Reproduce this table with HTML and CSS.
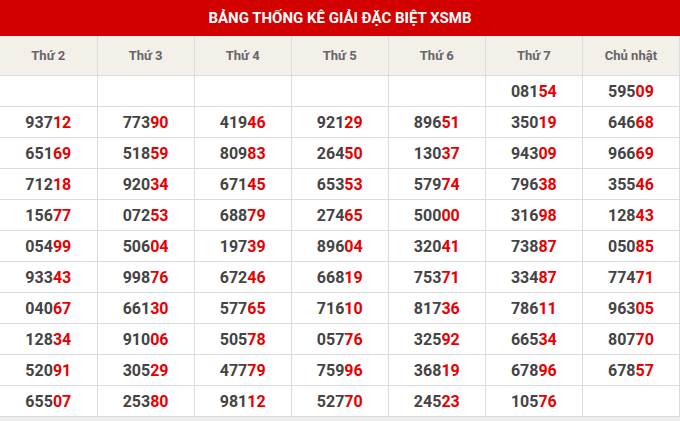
FILE: index.html
```html
<!DOCTYPE html>
<html lang="vi">
<head>
<meta charset="utf-8">
<link rel="stylesheet" href="styles.css">
</head>
<body>
<div class="box">
  <div class="title">BẢNG THỐNG KÊ GIẢI ĐẶC BIỆT XSMB</div>
  <table class="stats">
    <thead>
      <tr><th>Thứ 2</th><th>Thứ 3</th><th>Thứ 4</th><th>Thứ 5</th><th>Thứ 6</th><th>Thứ 7</th><th>Chủ nhật</th></tr>
    </thead>
    <tbody>
      <tr><td></td><td></td><td></td><td></td><td></td><td>081<b>54</b></td><td>595<b>09</b></td></tr>
      <tr><td>937<b>12</b></td><td>773<b>90</b></td><td>419<b>46</b></td><td>921<b>29</b></td><td>896<b>51</b></td><td>350<b>19</b></td><td>646<b>68</b></td></tr>
      <tr><td>651<b>69</b></td><td>518<b>59</b></td><td>809<b>83</b></td><td>264<b>50</b></td><td>130<b>37</b></td><td>943<b>09</b></td><td>966<b>69</b></td></tr>
      <tr><td>712<b>18</b></td><td>920<b>34</b></td><td>671<b>45</b></td><td>653<b>53</b></td><td>579<b>74</b></td><td>796<b>38</b></td><td>355<b>46</b></td></tr>
      <tr><td>156<b>77</b></td><td>072<b>53</b></td><td>688<b>79</b></td><td>274<b>65</b></td><td>500<b>00</b></td><td>316<b>98</b></td><td>128<b>43</b></td></tr>
      <tr><td>054<b>99</b></td><td>506<b>04</b></td><td>197<b>39</b></td><td>896<b>04</b></td><td>320<b>41</b></td><td>738<b>87</b></td><td>050<b>85</b></td></tr>
      <tr><td>933<b>43</b></td><td>998<b>76</b></td><td>672<b>46</b></td><td>668<b>19</b></td><td>753<b>71</b></td><td>334<b>87</b></td><td>774<b>71</b></td></tr>
      <tr><td>040<b>67</b></td><td>661<b>30</b></td><td>577<b>65</b></td><td>716<b>10</b></td><td>817<b>36</b></td><td>786<b>11</b></td><td>963<b>05</b></td></tr>
      <tr><td>128<b>34</b></td><td>910<b>06</b></td><td>505<b>78</b></td><td>057<b>76</b></td><td>325<b>92</b></td><td>665<b>34</b></td><td>807<b>70</b></td></tr>
      <tr><td>520<b>91</b></td><td>305<b>29</b></td><td>477<b>79</b></td><td>759<b>96</b></td><td>368<b>19</b></td><td>678<b>96</b></td><td>678<b>57</b></td></tr>
      <tr><td>655<b>07</b></td><td>253<b>80</b></td><td>981<b>12</b></td><td>527<b>70</b></td><td>245<b>23</b></td><td>105<b>76</b></td><td></td></tr>
    </tbody>
  </table>
</div>
</body>
</html>
```

FILE: styles.css
```css
html, body {
  margin: 0;
  padding: 0;
}
body {
  background: #eeeeee;
  font-family: Roboto, "Liberation Sans", Arial, sans-serif;
}
.box {
  width: 680px;
  background: #ffffff;
}
.title {
  height: 36px;
  line-height: 36px;
  background: #d30000;
  color: #ffffff;
  font-weight: 700;
  font-size: 15px;
  text-align: center;
}
.stats {
  width: 680px;
  border-collapse: collapse;
  table-layout: fixed;
}
.stats th {
  height: 39px;
  padding: 0;
  background: #f3efe9;
  color: #666666;
  font-weight: 700;
  font-size: 13px;
  text-align: center;
  border-right: 1px solid #dcdcdc;
  border-bottom: 1px solid #dcdcdc;
}
.stats td {
  height: 30px;
  padding: 0;
  color: #444444;
  font-weight: 700;
  font-size: 16px;
  text-align: center;
  border-right: 1px solid #dcdcdc;
  border-bottom: 1px solid #dcdcdc;
}
.stats b {
  color: #e60000;
  font-weight: 700;
}
```
